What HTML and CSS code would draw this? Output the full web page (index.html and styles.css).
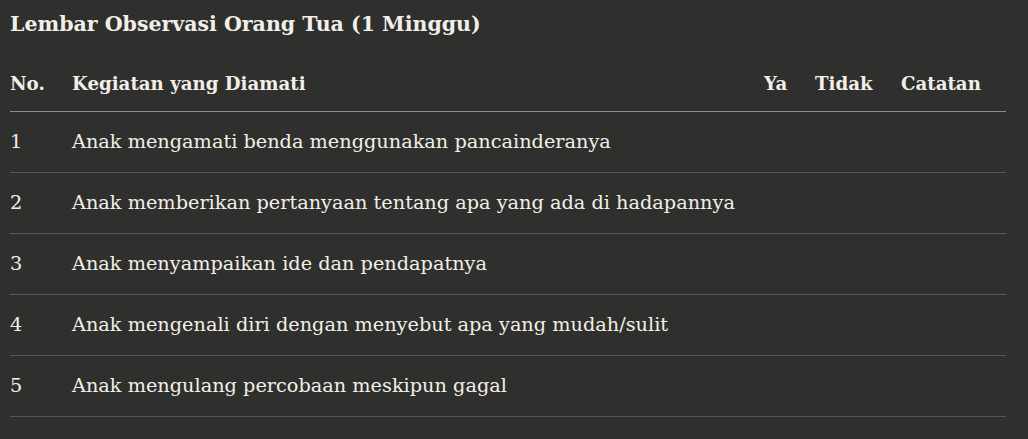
FILE: index.html
```html
<!DOCTYPE html>
<html lang="id">
<head>
<meta charset="utf-8">
<title>Lembar Observasi Orang Tua</title>
<link rel="stylesheet" href="styles.css">
</head>
<body>
<main class="page">
  <h2 class="title">Lembar Observasi Orang Tua (1 Minggu)</h2>
  <table class="obs">
    <colgroup>
      <col class="c-no"><col class="c-act"><col class="c-ya"><col class="c-tidak"><col class="c-cat">
    </colgroup>
    <thead>
      <tr><th>No.</th><th>Kegiatan yang Diamati</th><th>Ya</th><th>Tidak</th><th>Catatan</th></tr>
    </thead>
    <tbody>
      <tr><td>1</td><td>Anak mengamati benda menggunakan pancainderanya</td><td></td><td></td><td></td></tr>
      <tr><td>2</td><td>Anak memberikan pertanyaan tentang apa yang ada di hadapannya</td><td></td><td></td><td></td></tr>
      <tr><td>3</td><td>Anak menyampaikan ide dan pendapatnya</td><td></td><td></td><td></td></tr>
      <tr><td>4</td><td>Anak mengenali diri dengan menyebut apa yang mudah/sulit</td><td></td><td></td><td></td></tr>
      <tr><td>5</td><td>Anak mengulang percobaan meskipun gagal</td><td></td><td></td><td></td></tr>
    </tbody>
  </table>
</main>
</body>
</html>
```

FILE: styles.css
```css
html, body {
  margin: 0;
  padding: 0;
  background: #2f2f2d;
}
.page {
  padding: 9px 10px 0 10px;
  color: #f1efe8;
  font-family: "DejaVu Serif", "Liberation Serif", serif;
}
.title {
  margin: 0;
  font-size: 20.5px;
  line-height: 30px;
  font-weight: bold;
}
.obs {
  margin-top: 19px;
  width: 996px;
  border-collapse: collapse;
  table-layout: fixed;
  font-size: 19.3px;
}
.c-no { width: 62px; }
.c-act { width: 692px; }
.c-ya { width: 51px; }
.c-tidak { width: 86px; }
.c-cat { width: 105px; }
.obs th {
  text-align: left;
  font-weight: bold;
  font-size: 18.2px;
  padding: 13px 0 14px 0;
  line-height: 26px;
  border-bottom: 1px solid #8d8c88;
}
.obs td {
  padding: 17px 0 17px 0;
  line-height: 26px;
  border-bottom: 1px solid #575754;
}
.obs tbody tr:nth-child(2n) td {
  padding-bottom: 16.8px;
}
```
